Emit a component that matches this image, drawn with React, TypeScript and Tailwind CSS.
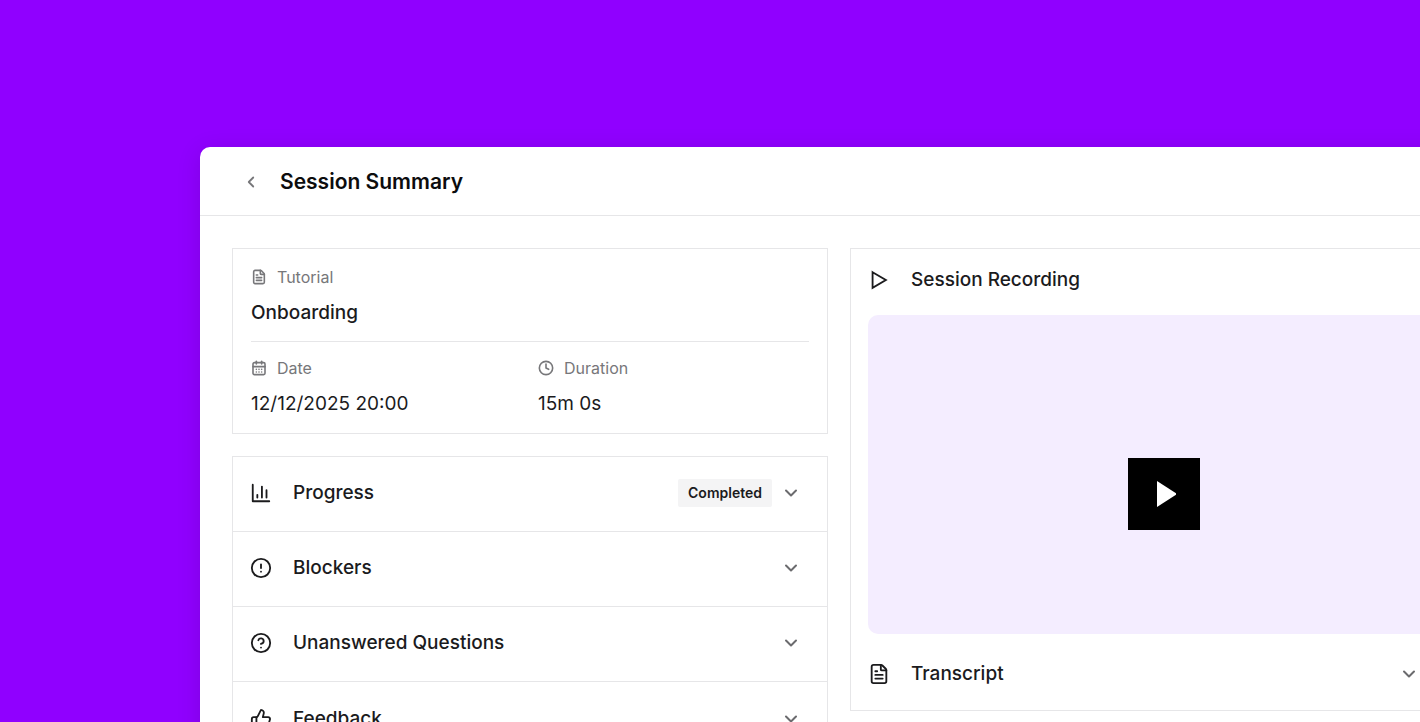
import { useState, type ReactNode } from 'react'
import {
  CalendarDays,
  ChevronDown,
  ChevronLeft,
  CircleAlert,
  CircleQuestionMark,
  Clock,
  FileText,
  ThumbsUp,
} from 'lucide-react'

function ChartIcon() {
  return (
    <svg width="22" height="22" viewBox="0 0 24 24" fill="none" stroke="currentColor" strokeWidth="2" strokeLinecap="round" strokeLinejoin="round" aria-hidden="true">
      <path d="M3 3v18h18" />
      <path d="M18 17V9M13 17V5M8 17v-3" />
    </svg>
  )
}

function PlayOutline() {
  return (
    <svg width="22" height="22" viewBox="0 0 24 24" fill="none" stroke="currentColor" strokeWidth="2" strokeLinejoin="miter" aria-hidden="true">
      <path d="M5 3.5 19.5 12 5 20.5z" />
    </svg>
  )
}

const SECTIONS = [
  { title: 'Progress', icon: <ChartIcon />, badge: 'Completed' },
  { title: 'Blockers', icon: <CircleAlert size={22} /> },
  { title: 'Unanswered Questions', icon: <CircleQuestionMark size={22} /> },
  { title: 'Feedback', icon: <ThumbsUp size={22} /> },
]

function Field({ label, icon, children }: { label: string; icon: ReactNode; children: ReactNode }) {
  return (
    <div>
      <dt className="flex items-center gap-[10px] text-base leading-5 text-[#77777a]">
        {icon}
        {label}
      </dt>
      <dd className="mt-3 text-[19px] leading-7">{children}</dd>
    </div>
  )
}

export default function App() {
  const [open, setOpen] = useState<string | null>(null)

  const toggle = (title: string) => setOpen(open === title ? null : title)

  return (
    <div className="h-screen overflow-hidden bg-[#9000ff] pt-[147px] pl-[200px] font-['Inter',sans-serif] text-[#1b1b1d]">
      <main className="-mr-[90px] min-h-full rounded-[10px] bg-white shadow-[0_4px_24px_rgba(0,0,0,0.12)]">
        <header className="flex h-[69px] items-center gap-5 border-b border-[#e6e6e8] px-[42px] pt-0.5">
          <button type="button" aria-label="Back" className="text-[#77777a]">
            <ChevronLeft size={18} strokeWidth={2.4} />
          </button>
          <h1 className="text-[21px] leading-8 font-semibold text-[#0c0c0d]">Session Summary</h1>
        </header>

        <div className="grid grid-cols-[596fr_628fr] items-start gap-[22px] p-8">
          <div className="flex flex-col gap-[22px]">
            <dl className="border border-[#e6e6e8] px-[18px] pt-[18px] pb-[15px]">
              <Field label="Tutorial" icon={<FileText size={16} strokeWidth={2.4} />}>
                <span className="font-medium">Onboarding</span>
              </Field>
              <div className="mt-[14px] grid grid-cols-2 gap-4 border-t border-[#e6e6e8] pt-4">
                <Field label="Date" icon={<CalendarDays size={16} strokeWidth={2.4} />}>12/12/2025 20:00</Field>
                <Field label="Duration" icon={<Clock size={16} strokeWidth={2.4} />}>15m 0s</Field>
              </div>
            </dl>

            <div className="divide-y divide-[#e6e6e8] border border-[#e6e6e8]">
              {SECTIONS.map(s => (
                <button
                  key={s.title}
                  type="button"
                  aria-expanded={open === s.title}
                  onClick={() => toggle(s.title)}
                  className="flex h-[75px] w-full items-center pr-[26px] pb-0.5 pl-[17px] text-left"
                >
                  {s.icon}
                  <span className="ml-[21px] flex-1 text-[19px] leading-7 font-medium">{s.title}</span>
                  {s.badge && (
                    <span className="mr-[9px] rounded-xs bg-[#f4f4f5] px-[10px] text-sm leading-7 font-semibold">
                      {s.badge}
                    </span>
                  )}
                  <ChevronDown size={20} strokeWidth={2.4} className="text-[#6b6b6e]" />
                </button>
              ))}
            </div>
          </div>

          <section className="border border-[#e6e6e8] px-[17px]">
            <h2 className="flex h-[66px] items-center gap-[21px] pb-1 text-[19px] leading-7 font-medium">
              <PlayOutline />
              Session Recording
            </h2>
            <div className="flex h-[319px] items-end justify-center rounded-[10px] bg-[#f4edff] pb-[104px]">
              <button type="button" aria-label="Play recording" className="flex size-[72px] items-center justify-center bg-black text-white">
                <svg width="24" height="28" viewBox="0 0 24 28" fill="currentColor" aria-hidden="true">
                  <path d="M5 1v26l20-13z" />
                </svg>
              </button>
            </div>
            <button
              type="button"
              aria-expanded={open === 'Transcript'}
              onClick={() => toggle('Transcript')}
              className="flex h-[76px] w-full items-center pt-1 pr-[41px] text-left"
            >
              <FileText size={22} />
              <span className="ml-[21px] flex-1 text-[19px] leading-7 font-medium">Transcript</span>
              <ChevronDown size={20} strokeWidth={2.4} className="text-[#6b6b6e]" />
            </button>
          </section>
        </div>
      </main>
    </div>
  )
}
